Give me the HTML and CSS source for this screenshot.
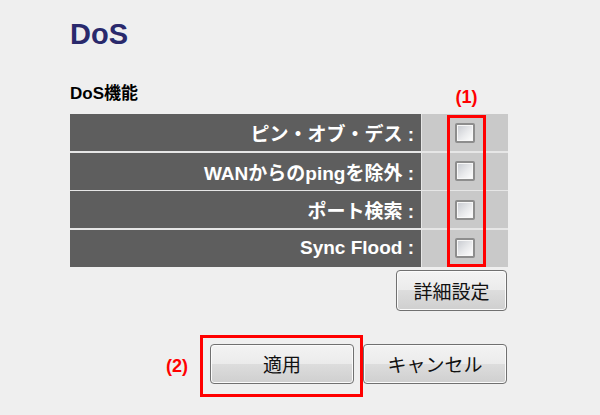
FILE: index.html
```html
<!DOCTYPE html>
<html lang="ja">
<head>
  <meta charset="UTF-8" />
  <title>DoS</title>
  <link rel="stylesheet" href="styles.css">
</head>
<body>
  <div class="page">
    <h1 class="title">DoS</h1>
    <h2 class="section">DoS機能</h2>

    <div class="dos-table">
      <div class="label-cell">ピン・オブ・デス :</div>
      <div class="check-cell"><span class="checkbox"></span></div>
      <div class="label-cell">WANからのpingを除外 :</div>
      <div class="check-cell"><span class="checkbox"></span></div>
      <div class="label-cell">ポート検索 :</div>
      <div class="check-cell"><span class="checkbox"></span></div>
      <div class="label-cell">Sync Flood :</div>
      <div class="check-cell"><span class="checkbox"></span></div>

      <div class="mark-label mark-label-1">(1)</div>
      <div class="mark-box-1"></div>
    </div>

    <div class="detail-row">
      <button class="btn btn-detail">詳細設定</button>
    </div>

    <div class="action-row">
      <span class="mark-label mark-label-2">(2)</span>
      <div class="apply-wrap">
        <button class="btn btn-action">適用</button>
      </div>
      <button class="btn btn-action btn-cancel">キャンセル</button>
    </div>
  </div>
</body>
</html>
```

FILE: styles.css
```css
body {
    margin: 0;
    padding: 0;
    background-color: #efefef;
    font-family: "Liberation Sans", "Noto Sans CJK JP", sans-serif;
    color: #000;
}

.page {
    width: 438px;
    padding-left: 70px;
    padding-bottom: 19px;
}

.title {
    margin: 0;
    padding-top: 18px;
    font-size: 29px;
    line-height: 33px;
    font-weight: 700;
    color: #29296c;
}

.section {
    margin: 33px 0 0 0;
    font-size: 17px;
    line-height: 20px;
    font-weight: 700;
}

.dos-table {
    position: relative;
    margin-top: 10px;
    display: grid;
    grid-template-columns: 351px 86px;
    grid-auto-rows: 37px;
    column-gap: 1px;
    row-gap: 1.5px;
    background-color: #e6e6e6;
}

.label-cell {
    background-color: #5e5e5e;
    color: #fff;
    font-size: 19px;
    font-weight: 700;
    display: flex;
    align-items: center;
    justify-content: flex-end;
    padding-right: 7px;
    white-space: pre;
}

.check-cell {
    background-color: #c9c9c9;
    display: flex;
    align-items: center;
    justify-content: center;
}

.checkbox {
    width: 20px;
    height: 20px;
    box-sizing: border-box;
    border: 2px solid #8d8d8d;
    border-radius: 2px;
    background: linear-gradient(135deg, #c6c9cf 0%, #e9eaec 55%, #ffffff 100%);
    box-shadow: inset 0 0 0 1px #f7f7f7;
}

/* annotation (1): red frame over the checkbox column */
.mark-box-1 {
    position: absolute;
    box-sizing: border-box;
    border: 3px solid #f00;
    left: 377px;
    top: 1px;
    width: 39px;
    height: 152px;
}

.mark-label {
    color: #f00;
    font-size: 18px;
    line-height: 18px;
    font-weight: 700;
}

.mark-label-1 {
    position: absolute;
    left: 377px;
    top: -26px;
    width: 39px;
    text-align: center;
}

.detail-row {
    display: flex;
    justify-content: flex-end;
    margin-top: 3px;
}

.btn {
    box-sizing: border-box;
    border: 1px solid #707070;
    border-radius: 4px;
    background: linear-gradient(#f3f3f3 0%, #ebebeb 50%, #dddddd 50%, #cfcfcf 100%);
    box-shadow: inset 0 0 0 1px #fbfbfb;
    font-family: "Noto Sans CJK JP", sans-serif;
    font-size: 19px;
    color: #111;
    padding: 0;
    cursor: pointer;
}

.btn-detail {
    width: 111px;
    height: 41px;
    margin-right: 1px;
}

.action-row {
    display: flex;
    justify-content: flex-end;
    align-items: flex-start;
    margin-top: 24px;
    padding-right: 1px;
}

.mark-label-2 {
    margin-top: 22px;
    margin-right: 12px;
}

/* annotation (2): red frame round the apply button */
.apply-wrap {
    display: flex;
    border: 3px solid #f00;
    padding: 6px 6px 10px 7px;
}

.btn-action {
    width: 144px;
    height: 40px;
}

.btn-cancel {
    margin-top: 9px;
}
```
